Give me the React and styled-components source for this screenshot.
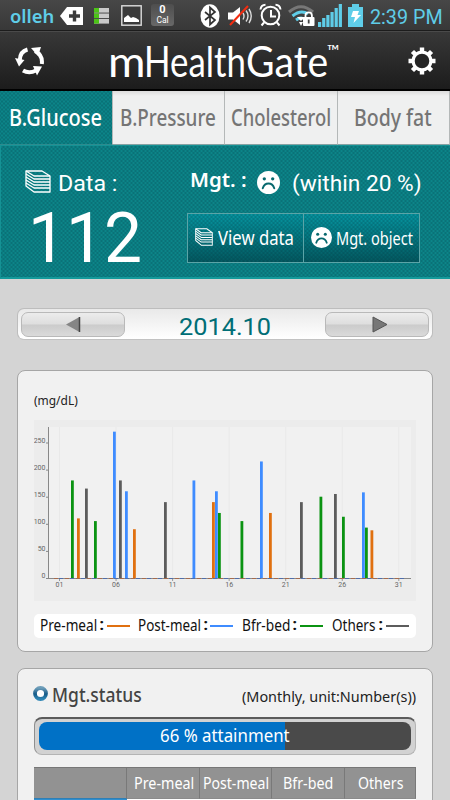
import React, { useLayoutEffect, useRef, useState } from "react";
import styled, { createGlobalStyle } from "styled-components";

const NOTO = `"Noto Sans", "Open Sans", sans-serif`;
const ROBOTO = `Roboto, "Liberation Sans", sans-serif`;
const LATO = `Lato, "Open Sans", sans-serif`;
const CYAN = "#5fcde8";

const GlobalStyle = createGlobalStyle`
  * {
    box-sizing: border-box;
  }

  body {
    margin: 0;
    background: #d4d4d4;
    overflow: hidden;
  }
`;

const Screen = styled.div`
  width: 450px;
  height: 800px;
  overflow: hidden;
  background: #d4d4d4;
  font-family: ${NOTO};
`;

const Icon = styled.svg`
  display: block;
  flex: none;
  margin-left: ${({ $ml = 0 }) => $ml}px;
  margin-top: ${({ $mt = 0 }) => $mt}px;
`;

/* Text squeezed or stretched to a given width */

const FitBox = styled.span`
  display: block;
  flex: none;
  width: ${({ $width }) => $width}px;
  margin-left: ${({ $ml = 0 }) => $ml}px;
  margin-top: ${({ $mt = 0 }) => $mt}px;
  font-family: ${({ $font }) => $font || NOTO};
  font-size: ${({ $size }) => $size}px;
  font-weight: ${({ $weight = 400 }) => $weight};
  color: ${({ $color = "inherit" }) => $color};
  line-height: 1.2;
`;

const FitInner = styled.span`
  display: inline-block;
  vertical-align: top;
  white-space: pre;
  transform-origin: 0 50%;
`;

const FitText = ({ width, size, weight, color, font, ml, mt, children }) => {
  const inner = useRef(null);
  const [scale, setScale] = useState(1);

  useLayoutEffect(() => {
    setScale(width / inner.current.offsetWidth);
  }, [width, size, children]);

  return (
    <FitBox
      $width={width}
      $size={size}
      $weight={weight}
      $color={color}
      $font={font}
      $ml={ml}
      $mt={mt}
    >
      <FitInner ref={inner} style={{ transform: `scaleX(${scale})` }}>
        {children}
      </FitInner>
    </FitBox>
  );
};

/* Status bar */

const StatusBar = styled.div`
  height: 31px;
  display: flex;
  align-items: center;
  background: linear-gradient(#474747, #383838);
  border-bottom: 1px solid #1c1c1c;
`;

const CalBox = styled.div`
  width: 23px;
  height: 22px;
  margin-left: 9px;
  border-radius: 3px;
  background: linear-gradient(#4e4e4e, #686868);
  color: #fff;
  display: flex;
  flex-direction: column;
  align-items: center;
  font: 700 11px/12px ${ROBOTO};
`;

const CalUnit = styled.span`
  font: 400 8.5px/8px ${ROBOTO};
`;

const StatusIcons = () => (
  <StatusBar>
    <FitText width={44} size={18} weight={600} color={CYAN} ml={10} mt={4}>
      olleh
    </FitText>
    <Icon $ml={6} $mt={1} width="23" height="20" viewBox="0 0 23 20">
      <path d="M0 10 7 1h16v18H7z" fill="#fff" />
      <path d="M14.500 4.500v11M9 10h11" stroke="#3c3c3c" strokeWidth="3.400" />
    </Icon>
    <Icon $ml={11} $mt={1} width="15" height="16" viewBox="0 0 15 16">
      {[0, 5.5, 11].map((y) => (
        <g key={y}>
          <rect y={y} width="15" height="4.600" fill="#c9c9c9" />
          <rect y={y} width="5" height="4.600" fill="#4cc417" />
        </g>
      ))}
    </Icon>
    <Icon $ml={12} $mt={1} width="21" height="21" viewBox="0 0 21 21">
      <rect x=".8" y=".8" width="19.400" height="19.400" fill="#3a3a3a" stroke="#ddd" strokeWidth="1.400" />
      <path d="M3 17v-4l4-3 3 3 2-1 3 1 3 2v2z" fill="#fff" />
    </Icon>
    <CalBox>
      0<CalUnit>Cal</CalUnit>
    </CalBox>
    <Icon $ml={26} $mt={1} width="20" height="24" viewBox="0 0 20 24">
      <ellipse cx="10" cy="12" rx="9.500" ry="11.800" fill="#fff" />
      <path d="M5 8l10 8-5 4.500v-17L15 8 5 16" fill="none" stroke="#333" strokeWidth="1.700" />
    </Icon>
    <Icon $ml={8} $mt={1} width="24" height="22" viewBox="0 0 24 22">
      <path d="M0 7.500h5L12 2v18l-7-5.500H0z" fill="#fff" />
      <path d="M15 8q2 3 0 6.500M18 5.500q4 5.500 0 11M21 4q4.500 7 0 14" fill="none" stroke="#ddd" strokeWidth="1.400" />
      <path d="M2 20 20 1" stroke="#f32c10" strokeWidth="2" />
    </Icon>
    <Icon $ml={7} width="23" height="24" viewBox="0 0 23 24">
      <circle cx="11.500" cy="12.500" r="8.800" fill="none" stroke="#fff" strokeWidth="2" />
      <path d="M12 7v6.500h5M5 19.500l-2.500 3M18 19.500l2.500 3M1.500 6.500Q2 2 6.500 1.800M16.500 1.800Q21 2 21.500 6.500" fill="none" stroke="#fff" strokeWidth="2" />
    </Icon>
    <Icon $ml={6} $mt={1} width="27" height="22" viewBox="0 0 27 22">
      <path d="M1 7Q13 -3.500 25 7" fill="none" stroke="#777" strokeWidth="3" />
      <path d="M4.500 11Q13 4 20 9M8 15Q12 12 15 13.500" fill="none" stroke={CYAN} strokeWidth="3" />
      <path d="M9 12h8l-4 4zM11 17h4l-2 4z" fill="#fff" />
      <rect x="15" y="12" width="11.500" height="9" rx="1" fill="#fff" />
      <path d="M17.500 12.500v-2a3.200 3.200 0 0 1 6.400 0v2" fill="none" stroke="#fff" strokeWidth="1.800" />
      <path d="M20.700 14.500v4" stroke="#444" strokeWidth="1.800" />
    </Icon>
    <Icon $ml={3} width="25" height="23" viewBox="0 0 25 23">
      {[5, 9, 12, 15, 19, 23].map((h, i) => (
        <rect key={h} x={i * 4.15} y={23 - h} width="3.200" height={h} fill={CYAN} />
      ))}
    </Icon>
    <Icon $ml={5} width="15" height="23" viewBox="0 0 15 23">
      <path d="M0 3h4V0h7v3h4v20H0z" fill={CYAN} />
      <path d="M5 7h6l-1.500 4H13l-7.500 8 1.500-6H3z" fill="#fff" />
    </Icon>
    <FitText width={73} size={20} color={CYAN} font={ROBOTO} ml={7} mt={3}>
      2:39 PM
    </FitText>
  </StatusBar>
);

/* App header */

const Header = styled.header`
  height: 60px;
  display: flex;
  align-items: flex-start;
  background: linear-gradient(#383838, #1c1c1c);
  border-top: 1px solid #4a4a4a;
  border-bottom: 2px solid #000;
`;

const Brand = styled.h1`
  margin: 4px 0 0 63px;
  width: 233px;
  display: flex;
  color: #fff;
`;

const HeaderBar = () => (
  <Header>
    <Icon $ml={15} $mt={14} width="30" height="30" viewBox="0 0 30 30">
      <g fill="none" stroke="#fff" strokeWidth="4">
        <path d="M12.500 3.500Q5 5.500 4.800 14" />
        <path d="M20 5Q28 9 26.800 18" />
        <path d="M8 24.500q6 3.500 13 0" />
      </g>
      <g fill="#fff">
        <path d="M0 12l9.500 2L4 20.500z" />
        <path d="M16 2l10-1-3 9z" />
        <path d="M18 20l9 .500-5 9z" />
      </g>
    </Icon>
    <Brand>
      <FitText width={38} size={42} font={LATO}>m</FitText>
      <FitText width={102} size={42} font={LATO} ml={-2}>Health</FitText>
      <FitText width={82} size={42} font={LATO}>Gate</FitText>
      <FitText width={13} size={17} font={LATO} ml={-1} mt={5}>™</FitText>
    </Brand>
    <Icon $ml={67} $mt={15} width="28" height="28" viewBox="0 0 28 28">
      <g stroke="#fff" strokeWidth="4.400">
        {[0, 45, 90, 135].map((a) => (
          <path key={a} d="M14 .500V5M14 23v4.500" transform={`rotate(${a} 14 14)`} />
        ))}
      </g>
      <circle cx="14" cy="14" r="8.900" fill="#242424" stroke="#fff" strokeWidth="3.200" />
    </Icon>
  </Header>
);

/* Tabs */

const Tabs = styled.nav`
  display: grid;
  grid-template-columns: 113px 112px 113px 112px;
  height: 54px;
`;

const weave = `
  repeating-linear-gradient(45deg, rgba(0, 50, 60, 0.12) 0 1.400px, transparent 1.400px 2.828px),
  repeating-linear-gradient(-45deg, rgba(0, 50, 60, 0.12) 0 1.400px, transparent 1.400px 2.828px)
`;

const Tab = styled.div`
  display: flex;
  padding-top: 13px;
  color: ${({ $active }) => ($active ? "#fff" : "#757575")};
  background: ${({ $active }) =>
    $active ? `${weave}, #0c8589` : "linear-gradient(#dcdcdc, #eff0f0 5px)"};
  border-right: 1px solid #b4b8b8;
  border-bottom: 1px solid ${({ $active }) => ($active ? "#2d8b8e" : "#85a2a3")};
`;

const TABS = [
  { label: "B.Glucose", ml: 9, width: 93, active: true },
  { label: "B.Pressure", ml: 7, width: 96 },
  { label: "Cholesterol", ml: 6, width: 100 },
  { label: "Body fat", ml: 16, width: 78 },
];

/* Summary */

const Summary = styled.section`
  display: flex;
  height: 134px;
  color: #fff;
  background: ${weave}, #0c8589;
  border: 1px solid #159295;
  border-right: 0;
  border-bottom: 2px solid #149a9b;
`;

const Reading = styled.div`
  width: 186px;
`;

const Target = styled.div`
  width: 235px;
`;

const Row = styled.div`
  display: flex;
  align-items: flex-start;
  height: ${({ $height }) => $height}px;
`;

const Actions = styled.div`
  display: grid;
  grid-template-columns: 116px 1fr;
  width: 233px;
  height: 50px;
  border: 1px solid #5ba4a7;
`;

const Action = styled.button`
  display: flex;
  align-items: flex-start;
  padding: 0;
  border: 0;
  border-right: ${({ $divided }) => ($divided ? "1px solid #5ba4a7" : 0)};
  color: #fff;
  text-align: left;
  background: ${weave}, linear-gradient(#06949f, #035960);
`;

const SheetsIcon = (props) => (
  <Icon viewBox="0 0 26 23" preserveAspectRatio="none" {...props}>
    <g fill="none" stroke="#fff" strokeWidth="1.300" strokeLinejoin="round">
      <path d="M1 1h16l8 5v16H9l-8-6z" />
      {[1, 4, 7, 10, 13].map((y) => (
        <path key={y} d={`M1 ${y}l8 5h16`} />
      ))}
    </g>
  </Icon>
);

const SadIcon = ({ size, ...rest }) => (
  <Icon width={size} height={size} viewBox="0 0 22 22" {...rest}>
    <circle cx="11" cy="11" r="11" fill="#fff" />
    <g fill="#07686e">
      <circle cx="7" cy="7.500" r="1.600" />
      <circle cx="15" cy="7.500" r="1.600" />
    </g>
    <path d="M5.500 16.500q1.500-4.500 5.500-4.500t5.500 4.500" fill="none" stroke="#07686e" strokeWidth="1.900" strokeLinecap="round" />
  </Icon>
);

/* Month picker */

const Content = styled.main`
  padding: 29px 17px 0;
`;

const MonthBar = styled.div`
  display: flex;
  justify-content: space-between;
  height: 32px;
  padding: 3px;
  border: 1px solid #bdbdbd;
  border-bottom-color: #c2c2c2;
  border-radius: 7px;
  background: linear-gradient(#e9e9e9, #fff);
`;

const MonthButton = styled.button`
  width: 104px;
  height: 25px;
  padding: 0;
  display: flex;
  justify-content: center;
  border: 1px solid #b9b9b9;
  border-radius: 7px;
  background: linear-gradient(#ececec, #dedede 48%, #cbcbcb 52%, #dadada);
`;

/* Cards */

const Card = styled.section`
  height: ${({ $height }) => $height}px;
  margin-top: ${({ $gap }) => $gap}px;
  padding: 0 16px;
  border: 1px solid #a6a6a6;
  border-radius: 8px;
  background: #f1f1f1;
`;

const Legend = styled.div`
  display: flex;
  height: 24px;
  margin-top: 13px;
  border-radius: 5px;
  background: #fff;
  color: #111;
`;

const LegendLine = styled.i`
  width: 23px;
  height: 2px;
  margin: 11px 0 0 ${({ $ml }) => $ml}px;
  background: ${({ $color }) => $color};
`;

const COLORS = {
  pre: "#e07010",
  post: "#3f8cff",
  bed: "#0b9312",
  other: "#5c5c5c",
};

const LEGEND = [
  { label: "Pre-meal", kind: "pre", ml: 5.5, width: 57, line: 2.5 },
  { label: "Post-meal", kind: "post", ml: 8, width: 63, line: 2 },
  { label: "Bfr-bed", kind: "bed", ml: 8.5, width: 48, line: 3 },
  { label: "Others", kind: "other", ml: 9, width: 43, line: 3 },
];

// x offset inside the chart, value in mg/dL
const BARS = [
  [37, 180, "bed"],
  [43, 110, "pre"],
  [51, 165, "other"],
  [60, 105, "bed"],
  [79, 270, "post"],
  [85, 180, "other"],
  [91, 160, "post"],
  [99, 90, "pre"],
  [130, 140, "other"],
  [158.5, 180, "post"],
  [178, 140, "pre"],
  [181, 160, "post"],
  [184, 120, "bed"],
  [206.5, 105, "bed"],
  [226, 215, "post"],
  [235, 120, "pre"],
  [266, 140, "other"],
  [285.5, 150, "bed"],
  [300, 155, "other"],
  [308, 113, "bed"],
  [328, 158, "post"],
  [331, 93, "bed"],
  [336.5, 88, "pre"],
];

const ChartSvg = styled.svg`
  display: block;
  background: #ececec;
  font: 7px ${ROBOTO};

  text {
    fill: #666;
  }
`;

const Chart = () => (
  <ChartSvg width="382" height="181" viewBox="0 0 382 181">
    <rect x="15" y="7" width="362" height="151" fill="#f1f1f1" />
    {["01", "06", "11", "16", "21", "26", "31"].map((day, i) => {
      const x = 25.5 + i * 56.55;
      return (
        <g key={day}>
          <path d={`M${x} 7v151`} stroke="#e9e9e9" />
          <path d={`M${x} 158v3`} stroke="#999" />
          <text x={x} y="167" textAnchor="middle">{day}</text>
        </g>
      );
    })}
    {[0, 50, 100, 150, 200, 250].map((v) => (
      <g key={v}>
        <path d={`M12 ${158.5 - v * 0.542}h3`} stroke="#888" />
        <text x="11.500" y={158 - v * 0.542} textAnchor="end">{v}</text>
      </g>
    ))}
    {BARS.map(([x, v, kind]) => (
      <rect key={x} x={x} y={158 - v * 0.542} width="2.800" height={v * 0.542} fill={COLORS[kind]} />
    ))}
    <path d="M14.500 7v151.500H377" fill="none" stroke="#888" />
    <path d="M20 158.500h350" stroke="#a56b4c" strokeDasharray="4 7" />
    <path d="M25 158.500h345" stroke="#506eaa" strokeDasharray="4 7" />
  </ChartSvg>
);

const Gauge = styled.div`
  height: 38px;
  margin-top: 9px;
  padding: 3px 4px 4px;
  border: 1px solid #b4b4b4;
  border-top: 2px solid #5b5b5b;
  border-left-color: #8f8f8f;
  border-radius: 8px;
  background: #d2d2d2;
`;

const GaugeTrack = styled.div`
  display: flex;
  height: 28px;
  border-radius: 8px;
  color: #fff;
  background: linear-gradient(90deg, #0071c6 ${({ $value }) => $value}%, #4a4a4a 0);
`;

const Table = styled.div`
  display: grid;
  grid-template-columns: 93px 73px 72px 73px 71px;
  margin-top: 12px;
`;

const HeadCell = styled.div`
  display: flex;
  height: 32px;
  border-top: 1px solid #777;
  border-right: 1px solid #797979;
  border-bottom: 1px solid ${({ $head }) => ($head ? "#2f7fb5" : "#8a8a8a")};
  background: #929292;
  color: #fff;
`;

const Cell = styled.div`
  height: 40px;
  background: ${({ $head }) => ($head ? "#2f8fd0" : "#fff")};
`;

const COLUMNS = [
  { label: "" },
  { label: "Pre-meal", ml: 7, width: 60 },
  { label: "Post-meal", ml: 3, width: 66 },
  { label: "Bfr-bed", ml: 11, width: 50 },
  { label: "Others", ml: 13, width: 45 },
];

const App = () => (
  <Screen>
    <GlobalStyle />
    <StatusIcons />
    <HeaderBar />
    <Tabs>
      {TABS.map(({ label, ml, width, active }) => (
        <Tab key={label} $active={active}>
          <FitText width={width} size={23} weight={500} ml={ml}>
            {label}
          </FitText>
        </Tab>
      ))}
    </Tabs>

    <Summary>
      <Reading>
        <Row $height={53}>
          <SheetsIcon width={26} height={23} $ml={24} $mt={24} />
          <FitText width={59} size={22} font={ROBOTO} ml={7} mt={25}>
            Data :
          </FitText>
        </Row>
        <FitText width={114} size={69.5} font={ROBOTO} ml={27} mt={-2}>
          112
        </FitText>
      </Reading>
      <Target>
        <Row $height={67}>
          <FitText width={57} size={19} weight={600} ml={3} mt={23}>
            Mgt. :
          </FitText>
          <SadIcon size={23} $ml={10} $mt={25} />
          <FitText width={130} size={22} font={ROBOTO} ml={12} mt={25}>
            (within 20 %)
          </FitText>
        </Row>
        <Actions>
          <Action $divided>
            <SheetsIcon width={18} height={18} $ml={7} $mt={14} />
            <FitText width={76} size={20} ml={5} mt={12}>
              View data
            </FitText>
          </Action>
          <Action>
            <SadIcon size={21} $ml={7} $mt={13} />
            <FitText width={77} size={18.5} ml={4} mt={13}>
              Mgt. object
            </FitText>
          </Action>
        </Actions>
      </Target>
    </Summary>

    <Content>
      <MonthBar>
        <MonthButton>
          <Icon $mt={3} width="16" height="17" viewBox="0 0 16 17">
            <path d="M1 8.500 14.500 1v15z" fill="#858585" />
            <path d="M14.500 1v15" stroke="#444" strokeWidth="1.500" />
          </Icon>
        </MonthButton>
        <FitText width={92} size={24.5} font={ROBOTO} color="#006e76">
          2014.10
        </FitText>
        <MonthButton>
          <Icon $ml={6} $mt={3} width="16" height="17" viewBox="0 0 16 17">
            <path d="M1 1l14 7.500L1 16z" fill="#777" stroke="#555" />
          </Icon>
        </MonthButton>
      </MonthBar>

      <Card $height={282} $gap={30}>
        <Row $height={49}>
          <FitText width={44} size={12.5} color="#222" mt={22}>
            (mg/dL)
          </FitText>
        </Row>
        <Chart />
        <Legend>
          {LEGEND.map(({ label, kind, ml, width, line }) => (
            <React.Fragment key={label}>
              <FitText width={width} size={16} ml={ml} mt={2}>
                {label}
              </FitText>
              <FitText width={5} size={16} weight={500} ml={2.5} mt={1}>
                :
              </FitText>
              <LegendLine $ml={line} $color={COLORS[kind]} />
            </React.Fragment>
          ))}
        </Legend>
      </Card>

      <Card $height={200} $gap={16}>
        <Row $height={39}>
          <Icon $ml={-1} $mt={17} width="15" height="15" viewBox="0 0 15 15">
            <defs>
              <linearGradient id="ring" x2="0" y2="1">
                <stop stopColor="#6d9db9" />
                <stop offset=".55" stopColor="#165b88" />
                <stop offset="1" stopColor="#2f86b5" />
              </linearGradient>
            </defs>
            <circle cx="7.500" cy="7.500" r="5.500" fill="#fff" stroke="url(#ring)" strokeWidth="3.800" />
          </Icon>
          <FitText width={90} size={20} weight={500} color="#444" ml={4} mt={14}>
            Mgt.status
          </FitText>
          <FitText width={174} size={14.5} color="#222" ml={100} mt={19}>
            (Monthly, unit:Number(s))
          </FitText>
        </Row>
        <Gauge>
          <GaugeTrack $value={66}>
            <FitText width={130} size={17.5} ml={121} mt={3}>
              66 % attainment
            </FitText>
          </GaugeTrack>
        </Gauge>
        <Table>
          {COLUMNS.map(({ label, ml, width }) => (
            <HeadCell key={label} $head={!label}>
              {label && (
                <FitText width={width} size={16} ml={ml} mt={6}>
                  {label}
                </FitText>
              )}
            </HeadCell>
          ))}
          {COLUMNS.map(({ label }) => (
            <Cell key={label} $head={!label} />
          ))}
        </Table>
      </Card>
    </Content>
  </Screen>
);

export default App;
